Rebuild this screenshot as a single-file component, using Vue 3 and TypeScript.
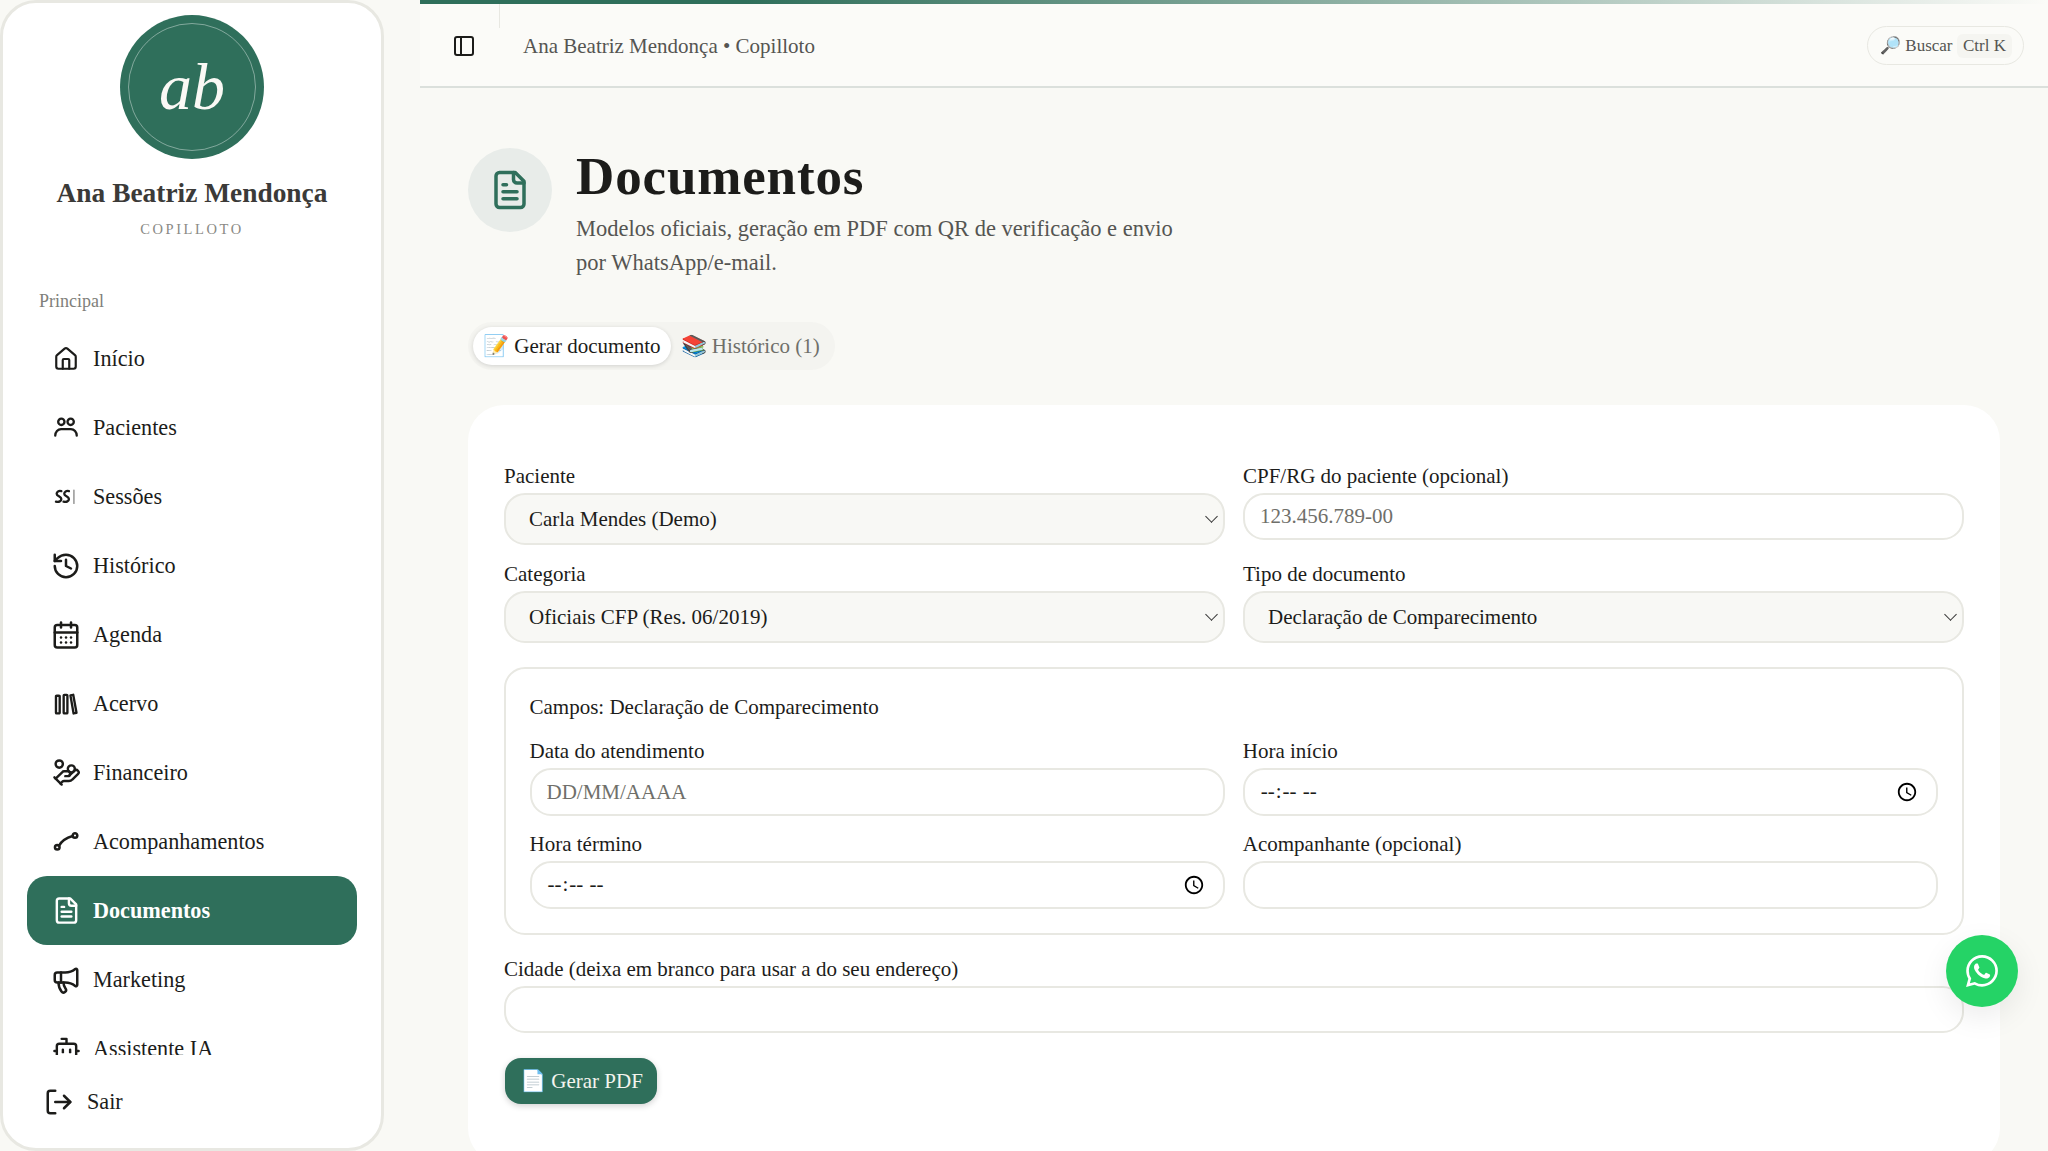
<script setup lang="ts">
interface NavItem {
  label: string
  size: number
  paths: string[]
  thin?: string
  active?: boolean
}

const navItems: NavItem[] = [
  { label: 'Início', size: 26, paths: ['M15 21v-8a1 1 0 0 0-1-1h-4a1 1 0 0 0-1 1v8', 'M3 10a2 2 0 0 1 .709-1.528l7-5.999a2 2 0 0 1 2.582 0l7 5.999A2 2 0 0 1 21 10v9a2 2 0 0 1-2 2H5a2 2 0 0 1-2-2z'] },
  { label: 'Pacientes', size: 28, paths: ['M8 4a2.7 2.7 0 1 0 0 5.4A2.7 2.7 0 0 0 8 4z', 'M16 4a2.7 2.7 0 1 0 0 5.4A2.7 2.7 0 0 0 16 4z', 'M2.8 18.5c0-3 2.2-5.500 5-5.500h8.400c2.800 0 5 2.500 5 5.500'] },
  { label: 'Sessões', size: 28, thin: 'M18.800 6v11.500', paths: ['M8 7c-2.200-.6-4 .4-4 2.200 0 2.300 4 2.100 4 4.600 0 1.900-1.900 2.700-4.600 2.200', 'M14.500 7c-2.200-.6-4 .4-4 2.200 0 2.300 4 2.100 4 4.600 0 1.900-1.900 2.700-4.600 2.200'] },
  { label: 'Histórico', size: 30, paths: ['M3 12a9 9 0 1 0 9-9 9.75 9.75 0 0 0-6.74 2.74L3 8', 'M3 3v5h5', 'M12 7v5l4 2'] },
  { label: 'Agenda', size: 30, paths: ['M8 2v4', 'M16 2v4', 'M5 4h14a2 2 0 0 1 2 2v14a2 2 0 0 1-2 2H5a2 2 0 0 1-2-2V6a2 2 0 0 1 2-2z', 'M3 10h18', 'M8 14h.01', 'M12 14h.01', 'M16 14h.01', 'M8 18h.01', 'M12 18h.01', 'M16 18h.01'] },
  { label: 'Acervo', size: 28, paths: ['M3.400 5.500a.6.6 0 0 1 .6-.6h2a.6.6 0 0 1 .6.6v14a.6.6 0 0 1-.6.6H4a.6.6 0 0 1-.6-.6z', 'M10 4.800a.6.6 0 0 1 .6-.6h2a.6.6 0 0 1 .6.6v14.700a.6.6 0 0 1-.6.6h-2a.6.6 0 0 1-.6-.6z', 'M15.800 4.600l2.400-.5 2.800 15.400-2.500.6z'] },
  { label: 'Financeiro', size: 29, paths: ['M11 15h2a2 2 0 1 0 0-4h-3c-.6 0-1.1.2-1.4.6L3 17', 'm7 21 1.6-1.4c.3-.4.8-.6 1.4-.6h4c1.1 0 2.1-.4 2.8-1.2l4.6-4.4a2 2 0 0 0-2.75-2.91l-4.2 3.9', 'm2 16 6 6', 'M16 6.100a2.900 2.900 0 1 0 0 5.800 2.900 2.900 0 0 0 0-5.800z', 'M6 2a3 3 0 1 0 0 6 3 3 0 0 0 0-6z'] },
  { label: 'Acompanhamentos', size: 30, paths: ['M5 14.350a1.850 1.850 0 1 0 0 3.700 1.850 1.850 0 0 0 0-3.700z', 'M19.200 4.950a1.850 1.850 0 1 0 0 3.700 1.850 1.850 0 0 0 0-3.700z', 'M6.400 15C8 12 11 9 17.400 7.200'] },
  { label: 'Documentos', size: 29, active: true, paths: ['M15 2H6a2 2 0 0 0-2 2v16a2 2 0 0 0 2 2h12a2 2 0 0 0 2-2V7Z', 'M14 2v4a2 2 0 0 0 2 2h4', 'M10 9H8', 'M16 13H8', 'M16 17H8'] },
  { label: 'Marketing', size: 30, paths: ['M11 6a13 13 0 0 0 8.4-2.8A1 1 0 0 1 21 4v12a1 1 0 0 1-1.6.8A13 13 0 0 0 11 14H5a2 2 0 0 1-2-2V8a2 2 0 0 1 2-2z', 'M6 14a12 12 0 0 0 2.4 7.2 2 2 0 0 0 3.2-2.4A8 8 0 0 1 10 14', 'M8 6v8'] },
  { label: 'Assistente IA', size: 29, paths: ['M12 8V4H8', 'M6 8h12a2 2 0 0 1 2 2v8a2 2 0 0 1-2 2H6a2 2 0 0 1-2-2v-8a2 2 0 0 1 2-2z', 'M2 14h2', 'M20 14h2', 'M15 13v2', 'M9 13v2'] },
]

const docIcon = navItems[8].paths
</script>

<template>
  <div class="app">
    <aside class="sidebar">
      <div class="brand">
        <div class="avatar"><span>ab</span></div>
        <div class="brand-name">Ana Beatriz Mendonça</div>
        <div class="brand-sub">COPILLOTO</div>
      </div>
      <div class="nav-title">Principal</div>
      <nav class="nav">
        <a v-for="item in navItems" :key="item.label" class="nav-item" :class="{ active: item.active }">
          <span class="nav-icon">
            <svg :width="item.size" :height="item.size" viewBox="0 0 24 24" fill="none" stroke="currentColor" stroke-width="2" stroke-linecap="round" stroke-linejoin="round">
              <path v-for="d in item.paths" :key="d" :d="d" />
              <path v-if="item.thin" :d="item.thin" stroke-width="1" opacity="0.6" />
            </svg>
          </span>
          {{ item.label }}
        </a>
      </nav>
      <a class="logout">
        <svg width="30" height="30" viewBox="0 0 24 24" fill="none" stroke="currentColor" stroke-width="2" stroke-linecap="round" stroke-linejoin="round">
          <path d="M9 21H5a2 2 0 0 1-2-2V5a2 2 0 0 1 2-2h4" />
          <path d="m16 17 5-5-5-5" />
          <path d="M21 12H9" />
        </svg>
        Sair
      </a>
    </aside>

    <main class="main">
      <header class="topbar">
        <div class="topbar-left">
          <svg width="24" height="24" viewBox="0 0 24 24" fill="none" stroke="currentColor" stroke-width="2" stroke-linecap="round" stroke-linejoin="round">
            <rect x="3" y="3" width="18" height="18" rx="2" />
            <path d="M9 3v18" />
          </svg>
          <span class="topbar-title">Ana Beatriz Mendonça • Copilloto</span>
        </div>
        <button class="search"><span>🔎 Buscar</span><kbd>Ctrl K</kbd></button>
      </header>

      <div class="content">
        <div class="page-head">
          <div class="page-icon">
            <svg width="42" height="42" viewBox="0 0 24 24" fill="none" stroke="currentColor" stroke-width="2" stroke-linecap="round" stroke-linejoin="round">
              <path v-for="d in docIcon" :key="d" :d="d" />
            </svg>
          </div>
          <div>
            <h1>Documentos</h1>
            <p>Modelos oficiais, geração em PDF com QR de verificação e envio por WhatsApp/e-mail.</p>
          </div>
        </div>

        <div class="tabs">
          <button class="tab active">📝 Gerar documento</button>
          <button class="tab">📚 Histórico (1)</button>
        </div>

        <section class="card">
          <div class="grid">
            <div class="field">
              <label>Paciente</label>
              <div class="select-wrap"><select><option>Carla Mendes (Demo)</option></select></div>
            </div>
            <div class="field">
              <label>CPF/RG do paciente (opcional)</label>
              <input type="text" placeholder="123.456.789-00" />
            </div>
            <div class="field">
              <label>Categoria</label>
              <div class="select-wrap"><select><option>Oficiais CFP (Res. 06/2019)</option></select></div>
            </div>
            <div class="field">
              <label>Tipo de documento</label>
              <div class="select-wrap"><select><option>Declaração de Comparecimento</option></select></div>
            </div>
          </div>

          <div class="subcard">
            <div class="subcard-title">Campos: Declaração de Comparecimento</div>
            <div class="grid">
              <div class="field">
                <label>Data do atendimento</label>
                <input type="text" placeholder="DD/MM/AAAA" />
              </div>
              <div class="field">
                <label>Hora início</label>
                <input type="time" />
              </div>
              <div class="field">
                <label>Hora término</label>
                <input type="time" />
              </div>
              <div class="field">
                <label>Acompanhante (opcional)</label>
                <input type="text" />
              </div>
            </div>
          </div>

          <div class="field city">
            <label>Cidade (deixa em branco para usar a do seu endereço)</label>
            <input type="text" />
          </div>

          <button class="primary">📄 Gerar PDF</button>
        </section>
      </div>
    </main>

    <a class="whatsapp">
      <svg width="32" height="32" viewBox="0 0 24 24" fill="#fff">
        <path d="M17.472 14.382c-.297-.149-1.758-.867-2.03-.967-.273-.099-.471-.148-.67.15-.197.297-.767.966-.94 1.164-.173.199-.347.223-.644.075-.297-.15-1.255-.463-2.39-1.475-.883-.788-1.48-1.761-1.653-2.059-.173-.297-.018-.458.13-.606.134-.133.298-.347.446-.52.149-.174.198-.298.298-.497.099-.198.05-.371-.025-.52-.075-.149-.669-1.612-.916-2.207-.242-.579-.487-.5-.669-.51-.173-.008-.371-.01-.57-.01-.198 0-.52.074-.792.372-.272.297-1.04 1.016-1.04 2.479 0 1.462 1.065 2.875 1.213 3.074.149.198 2.096 3.2 5.077 4.487.709.306 1.262.489 1.694.625.712.227 1.36.195 1.871.118.571-.085 1.758-.719 2.006-1.413.248-.694.248-1.289.173-1.413-.074-.124-.272-.198-.57-.347m-5.421 7.403h-.004a9.87 9.87 0 01-5.031-1.378l-.361-.214-3.741.982.998-3.648-.235-.374a9.86 9.86 0 01-1.51-5.26c.001-5.45 4.436-9.884 9.888-9.884 2.64 0 5.122 1.03 6.988 2.898a9.825 9.825 0 012.893 6.994c-.003 5.45-4.437 9.884-9.885 9.884m8.413-18.297A11.815 11.815 0 0012.05 0C5.495 0 .16 5.335.157 11.892c0 2.096.547 4.142 1.588 5.945L.057 24l6.305-1.654a11.882 11.882 0 005.683 1.448h.005c6.554 0 11.89-5.335 11.893-11.893a11.821 11.821 0 00-3.48-8.413Z" />
      </svg>
    </a>
  </div>
</template>

<style>
html,
body {
  margin: 0;
  height: 100%;
  overflow: hidden;
  background: #f9f9f5;
}
</style>

<style scoped>
.app {
  display: flex;
  height: 100vh;
  background: #f9f9f5;
  color: #1c1c1a;
  font-family: "Liberation Serif", serif;
  overflow: hidden;
}

.sidebar {
  width: 384px;
  flex-shrink: 0;
  box-sizing: border-box;
  display: flex;
  flex-direction: column;
  background: #fff;
  border: 3px solid #e8e8e2;
  border-radius: 36px;
}

.brand {
  display: flex;
  flex-direction: column;
  align-items: center;
  padding-top: 12px;
}

.avatar {
  position: relative;
  width: 144px;
  height: 144px;
  border-radius: 50%;
  background: #2f6f5b;
  color: #faf9f5;
  display: flex;
  align-items: center;
  justify-content: center;
  font-size: 66px;
  font-style: italic;
}

.avatar::after {
  content: "";
  position: absolute;
  inset: 8px;
  border: 1px solid rgba(255, 255, 255, 0.4);
  border-radius: 50%;
}

.brand-name {
  margin-top: 17px;
  font-size: 27.4px;
  line-height: 34px;
  font-weight: 700;
  color: #3b3a38;
}

.brand-sub {
  margin-top: 9px;
  font-size: 14.5px;
  line-height: 20px;
  letter-spacing: 2.6px;
  color: #8a8a85;
}

.nav-title {
  margin-top: 50px;
  padding-left: 36px;
  font-size: 18px;
  line-height: 24px;
  color: #80807a;
}

.nav {
  flex: 1;
  min-height: 0;
  overflow: hidden;
  margin-top: 11px;
  padding: 0 24px;
}

.nav-item {
  height: 69px;
  display: flex;
  align-items: center;
  gap: 14px;
  padding-left: 26px;
  border-radius: 20px;
  font-size: 22.2px;
  color: #1c1c1a;
}

.nav-item.active {
  background: #2f6f5b;
  color: #fff;
  font-weight: 700;
}

.nav-icon {
  width: 26px;
  display: flex;
  justify-content: center;
}

.nav-icon svg {
  flex-shrink: 0;
}

.logout {
  height: 93px;
  flex-shrink: 0;
  box-sizing: border-box;
  display: flex;
  align-items: center;
  gap: 13px;
  padding-left: 41px;
  font-size: 22.2px;
  color: #1c1c1a;
}

.main {
  flex: 1;
  min-width: 0;
  margin-left: 36px;
  display: flex;
  flex-direction: column;
}

.topbar {
  position: relative;
  height: 88px;
  flex-shrink: 0;
  box-sizing: border-box;
  display: flex;
  align-items: center;
  justify-content: space-between;
  padding: 6px 24px 0 32px;
  background: #fbfbf8;
  border-bottom: 2px solid #dbe0dc;
}

.topbar::before {
  content: "";
  position: absolute;
  top: 0;
  left: 0;
  right: 0;
  height: 4px;
  background: linear-gradient(90deg, #2f6f5b, #2f6f5b 20%, rgba(47, 111, 91, 0) 100%);
}

.topbar::after {
  content: "";
  position: absolute;
  top: 4px;
  left: 79px;
  width: 1px;
  height: 24px;
  background: #e8e8e2;
}

.topbar-left {
  display: flex;
  align-items: center;
  gap: 47px;
}

.topbar-title {
  font-size: 21px;
  color: #555552;
}

.search {
  height: 39px;
  box-sizing: border-box;
  display: flex;
  align-items: center;
  gap: 4.5px;
  padding: 0 11px 0 12px;
  margin-top: -1px;
  background: transparent;
  border: 1.5px solid #e8e8e2;
  border-radius: 20px;
  font-family: inherit;
  font-size: 17px;
  color: #555552;
}

.search kbd {
  padding: 2px 6px;
  border-radius: 6px;
  background: #f5f5f1;
  font-family: inherit;
  font-size: 17px;
  color: #555552;
}

.content {
  padding: 60px 48px 0;
}

.page-head {
  display: flex;
  gap: 24px;
}

.page-icon {
  width: 84px;
  height: 84px;
  flex-shrink: 0;
  border-radius: 50%;
  background: #e8ece9;
  color: #2f6f5b;
  display: flex;
  align-items: center;
  justify-content: center;
}

h1 {
  margin: -1px 0 0;
  font-size: 53px;
  line-height: 58px;
  letter-spacing: 0.86px;
  font-weight: 700;
  color: #1c1c1a;
}

.page-head p {
  margin: 7px 0 0;
  max-width: 615px;
  font-size: 22.5px;
  line-height: 34px;
  color: #555552;
}

.tabs {
  display: inline-flex;
  gap: 0;
  margin-top: 42px;
  padding: 5px;
  height: 48px;
  box-sizing: border-box;
  background: #f4f4f0;
  border-radius: 24px;
  vertical-align: top;
}

.tab {
  height: 38px;
  padding: 0 10px;
  border: 0;
  background: transparent;
  border-radius: 19px;
  font-family: inherit;
  font-size: 21px;
  color: #6f6f6a;
}

.tab.active {
  background: #fff;
  color: #1c1c1a;
  box-shadow: 0 1px 4px rgba(0, 0, 0, 0.14);
}

.card {
  margin-top: 35px;
  box-sizing: border-box;
  padding: 58px 36px 60px;
  background: #fff;
  border-radius: 36px;
}

.grid {
  display: grid;
  grid-template-columns: 1fr 1fr;
  column-gap: 18px;
  row-gap: 16px;
}

.field {
  min-width: 0;
}

.field label {
  display: block;
  height: 26px;
  margin-bottom: 4px;
  font-size: 21px;
  line-height: 26px;
  color: #1c1c1a;
}

input,
select {
  display: block;
  width: 100%;
  box-sizing: border-box;
  font-family: inherit;
  font-size: 21px;
  color: #1c1c1a;
  border: 2px solid #e8e8e2;
  border-radius: 21px;
  background: #fff;
}

input {
  height: 47px;
  padding: 0 15px;
}

input[type="time"] {
  letter-spacing: 0.8px;
}

input::placeholder {
  color: #6f6f6a;
}

.select-wrap {
  position: relative;
}

/* chevron do select, o nativo fica grosso demais */
.select-wrap::after {
  content: "";
  position: absolute;
  top: 19px;
  right: 9px;
  width: 8px;
  height: 8px;
  border-right: 1.2px solid #333;
  border-bottom: 1.2px solid #333;
  transform: rotate(45deg);
  pointer-events: none;
}

select {
  height: 52px;
  padding: 0 23px;
  appearance: none;
  background-color: #f8f8f5;
}

.subcard {
  margin-top: 24px;
  padding: 25px 24px 24px 23.5px;
  border: 2px solid #e8e8e2;
  border-radius: 21px;
}

.subcard .grid {
  row-gap: 15px;
}

.subcard input {
  height: 48px;
}

.subcard-title {
  height: 26px;
  margin-bottom: 18px;
  font-size: 21px;
  line-height: 26px;
}

.city {
  margin-top: 21px;
}

.primary {
  display: block;
  margin: 25px 0 0 1px;
  height: 46px;
  padding: 0 14px 0 15px;
  border: 0;
  border-radius: 16px;
  background: #2f6f5b;
  color: #f4f4ee;
  font-family: inherit;
  font-size: 21px;
  box-shadow: 0 2px 6px rgba(0, 0, 0, 0.18);
}

.whatsapp {
  position: fixed;
  right: 30px;
  bottom: 144px;
  width: 72px;
  height: 72px;
  border-radius: 50%;
  background: #25d366;
  display: flex;
  align-items: center;
  justify-content: center;
  box-shadow: 0 10px 30px rgba(0, 0, 0, 0.08);
}
</style>
